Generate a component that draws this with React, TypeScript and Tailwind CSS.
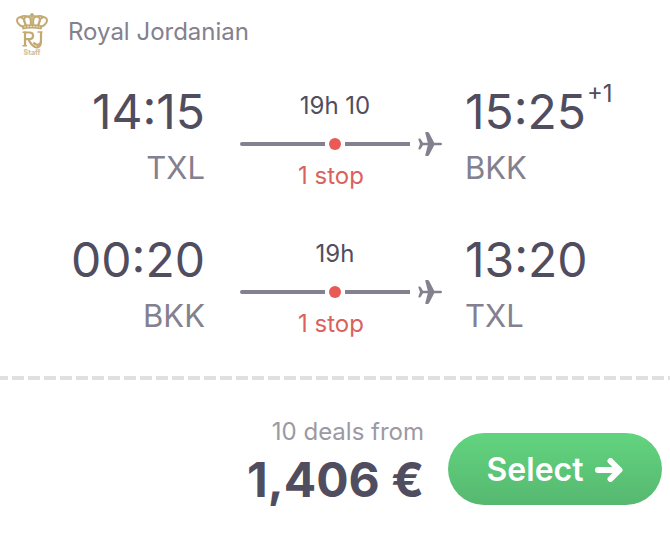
import React from 'react';

type Leg = {
  departure: string;
  from: string;
  arrival: string;
  to: string;
  duration: string;
  stops: string;
  dayOffset?: string;
};

const legs: Leg[] = [
  { departure: '14:15', from: 'TXL', arrival: '15:25', to: 'BKK', duration: '19h 10', stops: '1 stop', dayOffset: '+1' },
  { departure: '00:20', from: 'BKK', arrival: '13:20', to: 'TXL', duration: '19h', stops: '1 stop' },
];

const AirlineLogo = () => (
  <svg viewBox="0 0 32 44" className="h-11 w-8" fill="none" stroke="#c3aa72" aria-hidden="true">
    <circle cx="16" cy="2.600" r="1.700" fill="#c3aa72" stroke="none" />
    <path d="M6 14.500C-.5 11 0 5.500 4 5.200S9 9.500 9.500 13.500M26 14.500C32.500 11 32 5.500 28 5.200S23 9.500 22.500 13.500" strokeWidth="2" />
    <path d="M10.500 13.500C6.500 8.500 8 4.500 11.500 4.500S15 9 14.500 13M21.500 13.500C25.500 8.500 24 4.500 20.500 4.500S17 9 17.500 13" strokeWidth="1.800" />
    <path d="M4 5.200Q8 3 11.500 4.500Q16 3 20.500 4.500Q24 3 28 5.200M16 4v9" strokeWidth="1.600" />
    <path d="M5.500 13.500q10.500-2.600 21 0l-1 4q-9.500-2.200-19 0z" fill="#c3aa72" stroke="none" />
    <path d="M8 15.200q8-1.500 16 0" stroke="#f5eedc" strokeWidth=".8" strokeDasharray="2 1" />
    <path d="M9 34V20.500H13.500c4.800 0 4.800 6.700 0 6.700H10M12.500 27.200q2 5.500 6.500 7.800q5 1.500 6-4.500" strokeWidth="2.200" />
    <path d="M25 20v8.500c0 5-5 5.500-7.500 2" strokeWidth="2.200" />
    <path d="M6.500 20.200h4M6.500 33.800h4.500M21.500 20h5" strokeWidth="1.400" />
    <text x="16" y="43" textAnchor="middle" fontSize="7" fontWeight="800" fill="#d3c298" stroke="none">Staff</text>
  </svg>
);

const Plane = () => (
  <svg viewBox="0 0 24 24" className="h-6 w-6" fill="#83808f" aria-hidden="true">
    <path d="M23 10.800H16.200L11 .8Q10.500 0 9.500 0H8Q7 .1 7.300 1L9.800 10.800H5L2.800 7.200Q2.400 6.600 1.800 6.600H1Q.2 6.700.4 7.500L2 12 .4 16.500Q.2 17.300 1 17.400h.8q.6 0 1-.6l2.200-3.600h4.800L7.300 23q-.3.900.7 1h1.500q1 0 1.500-.8l5.200-10H23Q24 13 24 12t-1-1.200Z" />
  </svg>
);

const Track = () => (
  <div className="flex h-6 items-center">
    <div className="h-1 w-[85px] rounded-l-full bg-[#83808f]" />
    <div className="mx-1 h-3 w-3 rounded-full bg-[#e95a56]" />
    <div className="h-1 flex-1 bg-[#83808f]" />
    <div className="ml-2">
      <Plane />
    </div>
  </div>
);

const FlightLeg = ({ leg }: { leg: Leg }) => (
  <div className="grid grid-cols-[1fr_260px_1fr]">
    <div className="text-right">
      <div className="text-5xl leading-14">{leg.departure}</div>
      <div className="text-[31px] leading-14 text-[#83808f]">{leg.from}</div>
    </div>
    <div className="pt-1 pr-[23px] pl-[35px] text-2xl leading-9">
      <div className="pr-3 text-center">{leg.duration}</div>
      <div className="pt-2 pb-[2px]">
        <Track />
      </div>
      <div className="pr-5 text-center text-[#d9625c]">{leg.stops}</div>
    </div>
    <div>
      <div className="flex text-5xl leading-14">
        {leg.arrival}
        {leg.dayOffset && <sup className="top-0 ml-px text-2xl leading-5">{leg.dayOffset}</sup>}
      </div>
      <div className="text-[31px] leading-14 text-[#83808f]">{leg.to}</div>
    </div>
  </div>
);

const App = () => {
  return (
    <main className="min-h-screen bg-white font-['Inter',sans-serif] text-[#504d5f]">
      <header className="flex items-center gap-5 px-4 pt-3 text-2xl text-[#83808f]">
        <AirlineLogo />
        <h1 className="pb-1">Royal Jordanian</h1>
      </header>

      <section className="flex flex-col gap-9 pt-7">
        {legs.map((leg) => (
          <FlightLeg key={leg.departure} leg={leg} />
        ))}
      </section>

      <div className="mt-8 h-1 bg-[repeating-linear-gradient(90deg,#e0e0e0_0_8px,transparent_8px_12px,#e0e0e0_12px_16px)]" />

      <footer className="flex items-end justify-end gap-6 pt-9 pr-2">
        <div className="text-right">
          <div className="text-2xl text-[#9b99a3]">10 deals from</div>
          <div className="text-5xl leading-16 font-bold">1,406 €</div>
        </div>
        <button
          type="button"
          className="mb-[7px] flex h-[72px] w-[214px] items-center justify-center gap-3 rounded-full bg-linear-to-b from-[#62d47f] to-[#56b870] pt-px text-[32px] font-semibold text-white"
        >
          Select
          <svg viewBox="0 0 28 24" className="h-6 w-7" fill="none" stroke="currentColor" strokeWidth="6" strokeLinecap="round" strokeLinejoin="round" aria-hidden="true">
            <path d="M3 12H24M15.500 3L24.500 12L15.500 21" />
          </svg>
        </button>
      </footer>
    </main>
  );
};

export default App;
